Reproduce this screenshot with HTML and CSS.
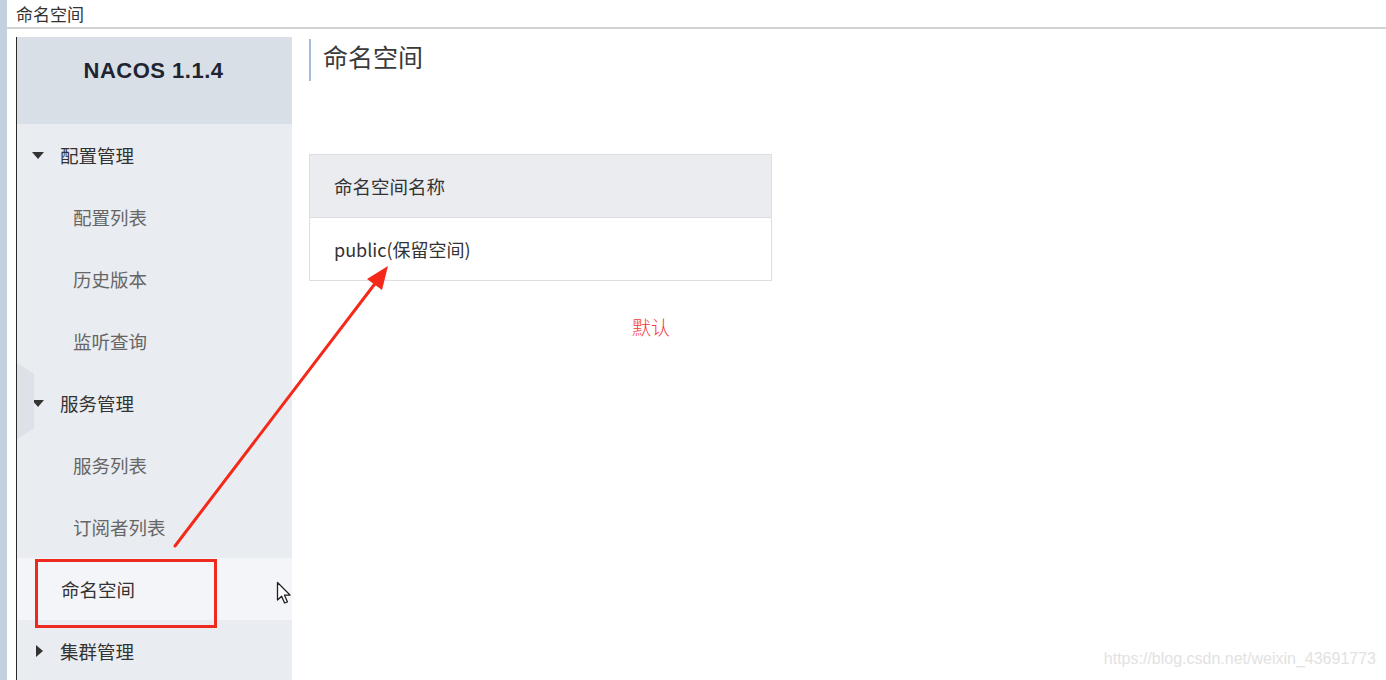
FILE: index.html
```html
<!DOCTYPE html>
<html lang="zh-CN">
<head>
<meta charset="utf-8">
<title>命名空间</title>
<link rel="stylesheet" href="styles.css">
</head>
<body>
<div class="app">
  <div class="edge"></div>
  <div class="content">
    <div class="topbar">命名空间</div>
    <div class="body">
      <aside class="sidebar">
        <div class="brand">NACOS 1.1.4</div>
        <ul class="menu">
          <li class="item parent"><span class="caret down"></span>配置管理</li>
          <li class="item child">配置列表</li>
          <li class="item child">历史版本</li>
          <li class="item child">监听查询</li>
          <li class="item parent"><span class="caret down"></span>服务管理</li>
          <li class="item child">服务列表</li>
          <li class="item child">订阅者列表</li>
          <li class="item top selected">命名空间</li>
          <li class="item parent"><span class="caret right"></span>集群管理</li>
        </ul>
        <div class="fold-tab"></div>
      </aside>
      <main class="main">
        <h1 class="title">命名空间</h1>
        <div class="table">
          <div class="thead">命名空间名称</div>
          <div class="trow">public(保留空间)</div>
        </div>
        <div class="note">默认</div>
      </main>
    </div>
  </div>
</div>

<div class="redbox"></div>
<svg class="cursor" width="20" height="26" viewBox="0 0 20 26">
  <path d="M1.5 1.5 L1.5 19 L5.6 15.2 L8.6 22 L11.4 20.8 L8.5 14.2 L14 14 Z" fill="#fff" stroke="#222" stroke-width="1.3" stroke-linejoin="round"/>
</svg>
<svg class="arrow" width="1386" height="680" viewBox="0 0 1386 680">
  <line x1="175" y1="546" x2="377" y2="281" stroke="#f5291a" stroke-width="3" stroke-linecap="round"/>
  <polygon points="388,266 382,290 367,279" fill="#f5291a"/>
</svg>
<div class="watermark">https://blog.csdn.net/weixin_43691773</div>
</body>
</html>
```
FILE: styles.css
```css
* { box-sizing: border-box; }
html, body { margin: 0; padding: 0; }
body {
  width: 1386px;
  height: 680px;
  overflow: hidden;
  background: #fff;
  font-family: "Noto Sans CJK SC", "Noto Sans", sans-serif;
  color: #333;
  position: relative;
}
.app {
  display: flex;
  height: 680px;
}
.edge {
  width: 7px;
  flex: none;
  background: #c3d0dd;
}
.content {
  flex: 1;
  display: flex;
  flex-direction: column;
}
.topbar {
  height: 32px;
  border-bottom: 2px solid #d2d2d2;
  padding-left: 9px;
  font-size: 17px;
  line-height: 27px;
  color: #333;
}
.body {
  flex: 1;
  display: flex;
  padding-top: 8px;
  padding-left: 9px;
}
.sidebar {
  width: 276px;
  flex: none;
  background: #e9ecf0;
  border-left: 1px solid #2a2a2a;
  position: relative;
}
.brand {
  height: 87px;
  background: #d9dfe6;
  display: flex;
  align-items: center;
  justify-content: center;
  padding-bottom: 20px;
  padding-right: 2px;
  font-family: "Liberation Sans", Arial, sans-serif;
  font-weight: bold;
  font-size: 22px;
  letter-spacing: 0.5px;
  color: #1e2430;
}
.menu {
  list-style: none;
  margin: 0;
  padding: 0;
}
.item {
  height: 62px;
  display: flex;
  align-items: center;
  font-size: 18.5px;
  position: relative;
}
.item.parent {
  padding-left: 15px;
  color: #333;
}
.item.child {
  padding-left: 56px;
  color: #666;
}
.item.top {
  padding-left: 44px;
  color: #333;
}
.item.selected {
  background: #f3f5f8;
}
.caret {
  width: 0;
  height: 0;
  margin-right: 16px;
}
.caret.down {
  border-left: 6px solid transparent;
  border-right: 6px solid transparent;
  border-top: 7px solid #333;
  margin-top: 1px;
}
.caret.right {
  border-top: 6px solid transparent;
  border-bottom: 6px solid transparent;
  border-left: 7px solid #333;
  margin-left: 4px;
  margin-right: 17px;
}
.fold-tab {
  position: absolute;
  left: 0;
  top: 326px;
  width: 17px;
  height: 76px;
  background: #dde2e8;
  clip-path: polygon(0 0, 100% 14%, 100% 86%, 0 100%);
}
.main {
  flex: 1;
  padding-left: 17px;
  position: relative;
}
.title {
  margin: 2px 0 0 0;
  height: 42px;
  border-left: 2px solid #a3bed6;
  padding-left: 12px;
  font-size: 25px;
  font-weight: normal;
  line-height: 34px;
  color: #3a3a3a;
}
.table {
  margin-top: 73px;
  width: 463px;
  border: 1px solid #dcdee3;
}
.thead {
  height: 63px;
  background: #ebecf0;
  border-bottom: 1px solid #dcdee3;
  padding-left: 24px;
  display: flex;
  align-items: center;
  font-size: 18.5px;
  color: #333;
}
.trow {
  height: 62px;
  padding-left: 24px;
  display: flex;
  align-items: center;
  font-size: 18px;
  color: #333;
}
.note {
  margin-top: 32px;
  margin-left: 323px;
  font-size: 19px;
  font-weight: 300;
  color: #f43a3a;
}
.redbox {
  position: absolute;
  left: 35px;
  top: 559px;
  width: 182px;
  height: 69px;
  border: 3px solid #ee2a1e;
}
.cursor {
  position: absolute;
  left: 276px;
  top: 581px;
}
.arrow {
  position: absolute;
  left: 0;
  top: 0;
  pointer-events: none;
}
.watermark {
  position: absolute;
  right: 10px;
  top: 650px;
  font-family: "Liberation Sans", Arial, sans-serif;
  font-size: 16px;
  color: #e2e2e2;
}
```
